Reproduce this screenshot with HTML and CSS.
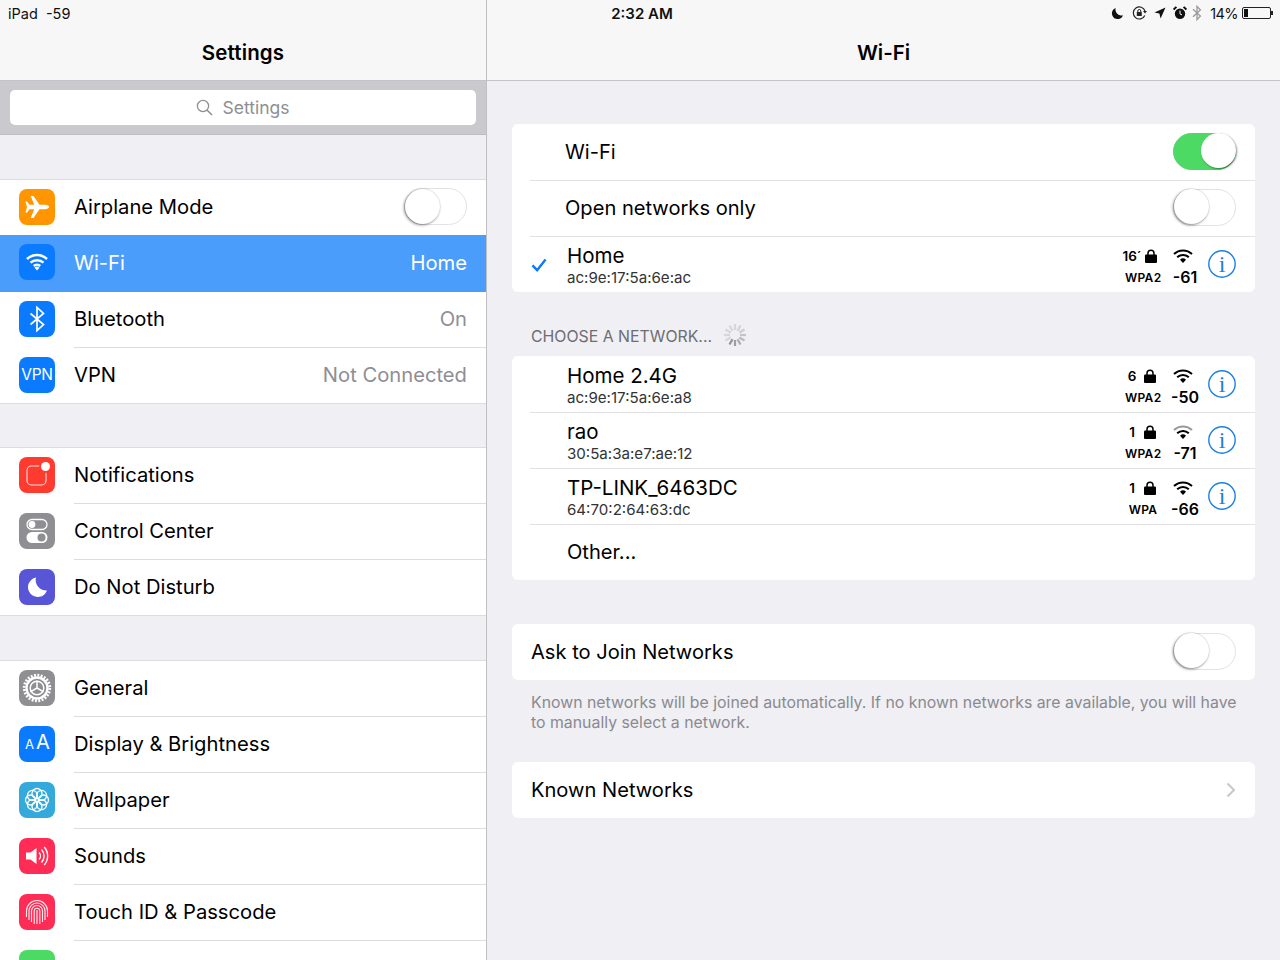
FILE: index.html
```html
<!DOCTYPE html>
<html lang="en">
<head>
<meta charset="utf-8">
<title>Settings - Wi-Fi</title>
<link rel="stylesheet" href="styles.css">
</head>
<body>
<div class="screen">
  <div class="status">
    <div class="carrier">iPad&nbsp; -59</div>
    <div class="time">2:32 AM</div>
    <div class="indicators">
      <svg class="st st-moon" viewBox="0 0 14 14"><path d="M5 1a6.2 6.2 0 1 0 8 8A6.6 6.6 0 0 1 5 1z" fill="#111"/></svg>
      <svg class="st st-rot" viewBox="0 0 16 14"><path d="M12.8 9.5A6 6 0 1 1 13 5" fill="none" stroke="#222" stroke-width="1.2"/><path d="M11 5h4l-2 2.4z" fill="#222"/><rect x="4.8" y="6" width="5" height="4" rx=".6" fill="#222"/><path d="M5.8 6V5a1.5 1.5 0 0 1 3 0v1" fill="none" stroke="#222"/></svg>
      <svg class="st st-loc" viewBox="0 0 12 12"><path d="M11.5.5 6.6 11.5 5.4 6.6.5 5.4z" fill="#111"/></svg>
      <svg class="st st-alarm" viewBox="0 0 14 14"><circle cx="7" cy="7.700" r="5.200" fill="#111"/><path d="M7 4.600v3.300l2 1" fill="none" stroke="#fff" stroke-width="1"/><path d="M.6 3.600 3.400.9M10.600.9l2.800 2.700" stroke="#111" stroke-width="2"/></svg>
      <svg class="st st-bt" viewBox="0 0 10 16"><path d="M1 4.200 8.400 11 5 14.600V1.400L8.400 5 1 11.800" fill="none" stroke="#9a9a9e" stroke-width="1.300"/></svg>
      <span class="pct">14%</span>
      <span class="battery"><span class="charge"></span></span>
    </div>
  </div>

  <aside class="master">
    <header class="bar"><h1>Settings</h1></header>
    <div class="searchwrap">
      <div class="search">
        <svg class="lens" viewBox="0 0 17 17"><circle cx="7" cy="7" r="5.600" fill="none" stroke="#8e8e93" stroke-width="1.300"/><path d="m11 11 5 5" stroke="#8e8e93" stroke-width="1.500"/></svg>
        <span>Settings</span>
      </div>
    </div>

    <div class="gap"></div>
    <section class="group">
      <div class="item">
        <span class="ico orange"><svg viewBox="0 0 36 36"><path d="M30 18c0-1.300-2-2.200-4-2.200h-5.500L14.500 7h-2.800l3.500 8.800H10.500L8 12.500H6.500L8 18 6.500 23.500H8l2.500-3.300h4.700L11.700 29h2.800l6-8.800H26c2 0 4-.9 4-2.200z" fill="#fff"/></svg></span>
        <span class="label">Airplane Mode</span>
        <span class="toggle"><span class="knob"></span></span>
      </div>
      <div class="item selected">
        <span class="ico blue"><svg viewBox="0 0 36 36"><path d="M8 15a14.500 14.500 0 0 1 20 0M11.500 18.700a9.500 9.500 0 0 1 13 0M14.800 22a4.700 4.700 0 0 1 6.400 0" fill="none" stroke="#fff" stroke-width="2.500"/><path d="m18 26.500-2.500-2.800a3.600 3.600 0 0 1 5 0z" fill="#fff"/></svg></span>
        <span class="label">Wi-Fi</span>
        <span class="value">Home</span>
      </div>
      <div class="item">
        <span class="ico blue"><svg viewBox="0 0 36 36"><path d="M11.500 12.500 24.500 23.500 18 29.500V6.500L24.500 12.500 11.500 23.500" fill="none" stroke="#fff" stroke-width="1.700"/></svg></span>
        <span class="label">Bluetooth</span>
        <span class="value">On</span>
      </div>
      <div class="item">
        <span class="ico blue vpn">VPN</span>
        <span class="label">VPN</span>
        <span class="value">Not Connected</span>
      </div>
    </section>

    <div class="gap gap-short"></div>
    <section class="group">
      <div class="item">
        <span class="ico red"><svg viewBox="0 0 36 36"><rect x="8" y="9" width="19" height="19" rx="4.500" fill="none" stroke="#fff" stroke-width="1.100" opacity=".85"/><circle cx="26.500" cy="9.500" r="6.500" fill="#ff3b30"/><circle cx="26.500" cy="9.500" r="4.500" fill="#fff"/></svg></span>
        <span class="label">Notifications</span>
      </div>
      <div class="item">
        <span class="ico grey"><svg viewBox="0 0 36 36"><rect x="8" y="6.500" width="20" height="10" rx="5" fill="none" stroke="#fff" stroke-width="1.300"/><circle cx="13" cy="11.500" r="3.400" fill="#fff"/><rect x="7.500" y="19" width="21" height="11" rx="5.500" fill="#fff"/><circle cx="22.500" cy="24.500" r="4" fill="#8e8e93"/></svg></span>
        <span class="label">Control Center</span>
      </div>
      <div class="item">
        <span class="ico purple"><svg viewBox="0 0 36 36"><path d="M17 8.500A9.800 9.800 0 1 0 28 21.500 10.500 10.500 0 0 1 17 8.500z" fill="#fff"/></svg></span>
        <span class="label">Do Not Disturb</span>
      </div>
    </section>

    <div class="gap"></div>
    <section class="group">
      <div class="item">
        <span class="ico grey"><svg viewBox="0 0 36 36"><circle cx="18" cy="18" r="12.800" fill="none" stroke="#fff" stroke-width="2.800" stroke-dasharray="1.900 1.450"/><circle cx="18" cy="18" r="10.500" fill="none" stroke="#fff" stroke-width="2.400"/><circle cx="18" cy="18" r="6.800" fill="none" stroke="#fff" stroke-width="1.500"/><path d="M18 18V10.500M18 18l6.600 3.800M18 18l-6.600 3.800" stroke="#fff" stroke-width="1.500"/></svg></span>
        <span class="label">General</span>
      </div>
      <div class="item">
        <span class="ico blue aa"><small>A</small>A</span>
        <span class="label">Display &amp; Brightness</span>
      </div>
      <div class="item">
        <span class="ico sky"><svg viewBox="0 0 36 36"><g fill="none" stroke="#fff" stroke-width="1.300"><circle cx="18" cy="11.500" r="5"/><circle cx="18" cy="24.500" r="5"/><circle cx="11.500" cy="18" r="5"/><circle cx="24.500" cy="18" r="5"/><circle cx="13.400" cy="13.400" r="5"/><circle cx="22.600" cy="13.400" r="5"/><circle cx="13.400" cy="22.600" r="5"/><circle cx="22.600" cy="22.600" r="5"/></g></svg></span>
        <span class="label">Wallpaper</span>
      </div>
      <div class="item">
        <span class="ico pink"><svg viewBox="0 0 36 36"><path d="M7 14.500h4.500l6-4.500v16l-6-4.500H7z" fill="#fff"/><path d="M20 14.500a5 5 0 0 1 0 7M22.500 11.500a9.500 9.500 0 0 1 0 13M25.200 9a13.500 13.500 0 0 1 0 18" fill="none" stroke="#fff" stroke-width="1.400"/></svg></span>
        <span class="label">Sounds</span>
      </div>
      <div class="item">
        <span class="ico pink"><svg viewBox="0 0 36 36"><g fill="none" stroke="#fff" stroke-width="1.100" opacity=".92"><path d="M7.500 23V17a10.500 10.500 0 0 1 21 0v6"/><path d="M10 26V17a8 8 0 0 1 16 0v9"/><path d="M12.500 28V17a5.500 5.500 0 0 1 11 0v11"/><path d="M15.200 30V17a2.800 2.800 0 0 1 5.600 0v13"/><path d="M18 30V16"/></g></svg></span>
        <span class="label">Touch ID &amp; Passcode</span>
      </div>
      <div class="item">
        <span class="ico green"></span>
      </div>
    </section>
  </aside>

  <main class="detail">
    <header class="bar"><h1>Wi-Fi</h1></header>
    <div class="content">
      <section class="card">
        <div class="row inset"><span class="label">Wi-Fi</span>
          <span class="toggle on"><span class="knob"></span></span></div>
        <div class="row inset"><span class="label">Open networks only</span>
          <span class="toggle"><span class="knob"></span></span></div>
        <div class="row net">
          <svg class="check" viewBox="0 0 17 15"><path d="m1.500 8 5 5L15.500 1.500" fill="none" stroke="#0a7aff" stroke-width="2.600"/></svg>
          <div class="names"><div class="ssid">Home</div><div class="mac">ac:9e:17:5a:6e:ac</div></div>
          <div class="sec"><div class="chan"><span>16´</span><svg class="lock" viewBox="0 0 12 14"><path d="M3 6V4.200a3 3 0 0 1 6 0V6" fill="none" stroke="#000" stroke-width="1.500"/><rect y="5.500" width="12" height="8.500" rx="1" fill="#000"/></svg></div><div class="wpa">WPA2</div></div>
          <div class="sig"><svg class="wifi" viewBox="0 0 20 14"><path d="M1 5a13 13 0 0 1 18 0M4.200 8.200a8.500 8.500 0 0 1 11.600 0" fill="none" stroke="#000" stroke-width="2"/><path d="m10 14-3-3.300a4.400 4.400 0 0 1 6 0z" fill="#000"/></svg><div class="db">-61</div></div>
          <svg class="info" viewBox="0 0 28 28"><circle cx="14" cy="14" r="13.200" fill="none" stroke="#1a80e5" stroke-width="1.400"/><text x="14" y="22" text-anchor="middle">i</text></svg>
        </div>
      </section>

      <div class="sechead"><span>CHOOSE A NETWORK...</span>
        <svg class="spin" viewBox="0 0 24 24"><g stroke="#8e8e93" stroke-width="2.200"><path d="M12 1v6" opacity=".25"/><path d="M17.500 2.500l-3 5.200" opacity=".3"/><path d="M21.500 6.500l-5.200 3" opacity=".35"/><path d="M23 12h-6" opacity=".45"/><path d="M21.500 17.500l-5.200-3" opacity=".55"/><path d="M17.500 21.500l-3-5.200" opacity=".7"/><path d="M12 23v-6" opacity=".85"/><path d="M6.500 21.500l3-5.200" opacity=".95"/><path d="M2.500 17.500l5.200-3" opacity=".25"/><path d="M1 12h6" opacity=".25"/><path d="M2.500 6.500l5.200 3" opacity=".25"/><path d="M6.500 2.500l3 5.200" opacity=".25"/></g></svg>
      </div>

      <section class="card">
        <div class="row net">
          <div class="names"><div class="ssid">Home 2.4G</div><div class="mac">ac:9e:17:5a:6e:a8</div></div>
          <div class="sec"><div class="chan"><span>6</span><svg class="lock" viewBox="0 0 12 14"><path d="M3 6V4.200a3 3 0 0 1 6 0V6" fill="none" stroke="#000" stroke-width="1.500"/><rect y="5.500" width="12" height="8.500" rx="1" fill="#000"/></svg></div><div class="wpa">WPA2</div></div>
          <div class="sig"><svg class="wifi" viewBox="0 0 20 14"><path d="M1 5a13 13 0 0 1 18 0M4.200 8.200a8.500 8.500 0 0 1 11.600 0" fill="none" stroke="#000" stroke-width="2"/><path d="m10 14-3-3.300a4.400 4.400 0 0 1 6 0z" fill="#000"/></svg><div class="db">-50</div></div>
          <svg class="info" viewBox="0 0 28 28"><circle cx="14" cy="14" r="13.200" fill="none" stroke="#1a80e5" stroke-width="1.400"/><text x="14" y="22" text-anchor="middle">i</text></svg>
        </div>
        <div class="row net">
          <div class="names"><div class="ssid">rao</div><div class="mac">30:5a:3a:e7:ae:12</div></div>
          <div class="sec"><div class="chan"><span>1</span><svg class="lock" viewBox="0 0 12 14"><path d="M3 6V4.200a3 3 0 0 1 6 0V6" fill="none" stroke="#000" stroke-width="1.500"/><rect y="5.500" width="12" height="8.500" rx="1" fill="#000"/></svg></div><div class="wpa">WPA2</div></div>
          <div class="sig"><svg class="wifi" viewBox="0 0 20 14"><path d="M1 5a13 13 0 0 1 18 0" fill="none" stroke="#999" stroke-width="2"/><path d="M4.200 8.200a8.500 8.500 0 0 1 11.600 0" fill="none" stroke="#000" stroke-width="2"/><path d="m10 14-3-3.300a4.400 4.400 0 0 1 6 0z" fill="#000"/></svg><div class="db">-71</div></div>
          <svg class="info" viewBox="0 0 28 28"><circle cx="14" cy="14" r="13.200" fill="none" stroke="#1a80e5" stroke-width="1.400"/><text x="14" y="22" text-anchor="middle">i</text></svg>
        </div>
        <div class="row net">
          <div class="names"><div class="ssid">TP-LINK_6463DC</div><div class="mac">64:70:2:64:63:dc</div></div>
          <div class="sec"><div class="chan"><span>1</span><svg class="lock" viewBox="0 0 12 14"><path d="M3 6V4.200a3 3 0 0 1 6 0V6" fill="none" stroke="#000" stroke-width="1.500"/><rect y="5.500" width="12" height="8.500" rx="1" fill="#000"/></svg></div><div class="wpa">WPA</div></div>
          <div class="sig"><svg class="wifi" viewBox="0 0 20 14"><path d="M1 5a13 13 0 0 1 18 0M4.200 8.200a8.500 8.500 0 0 1 11.600 0" fill="none" stroke="#000" stroke-width="2"/><path d="m10 14-3-3.300a4.400 4.400 0 0 1 6 0z" fill="#000"/></svg><div class="db">-66</div></div>
          <svg class="info" viewBox="0 0 28 28"><circle cx="14" cy="14" r="13.200" fill="none" stroke="#1a80e5" stroke-width="1.400"/><text x="14" y="22" text-anchor="middle">i</text></svg>
        </div>
        <div class="row net"><span class="label">Other...</span></div>
      </section>

      <section class="card join">
        <div class="row plain"><span class="label">Ask to Join Networks</span>
          <span class="toggle"><span class="knob"></span></span></div>
      </section>
      <p class="note">Known networks will be joined automatically. If no known networks are available, you will have to manually select a network.</p>
      <section class="card">
        <div class="row plain"><span class="label">Known Networks</span>
          <svg class="chev" viewBox="0 0 10 16"><path d="m1.500 1.500 6.500 6.500-6.500 6.500" fill="none" stroke="#c7c7cc" stroke-width="2"/></svg></div>
      </section>
    </div>
  </main>
</div>
</body>
</html>
```

FILE: styles.css
```css
* { box-sizing: border-box; }
html, body { margin: 0; padding: 0; }
body { font-family: Inter, "Liberation Sans", sans-serif; color: #000; background: #efeff4; }

.screen { position: relative; width: 1280px; height: 960px; overflow: hidden; display: flex; }

/* status bar sits over both navigation bars */
.status { position: absolute; top: 0; left: 0; right: 0; height: 26px; padding: 0 7px 0 8px; display: grid; grid-template-columns: 1fr auto 1fr; align-items: center; font-size: 14.500px; color: #111; }
.carrier { font-size: 14.500px; }
.time { font-weight: 600; font-size: 15px; padding-left: 3px; }
.indicators { display: flex; align-items: center; justify-content: flex-end; }
.st { display: block; }
.st-moon { width: 13px; height: 13px; margin-right: 8px; }
.st-rot { width: 16px; height: 14px; margin-right: 6px; }
.st-loc { width: 12px; height: 12px; margin-right: 7px; }
.st-alarm { width: 14px; height: 14px; margin-right: 5px; }
.st-bt { width: 10px; height: 16px; margin-right: 8px; }
.pct { font-size: 14.500px; letter-spacing: -.6px; margin-right: 4px; }
.battery { position: relative; width: 29px; height: 12px; border: 1px solid #222; border-radius: 2px; margin-right: 2px; padding: 1px; display: block; }
.battery::after { content: ""; position: absolute; right: -3px; top: 3px; width: 2px; height: 4px; background: #222; }
.charge { display: block; width: 4px; height: 8px; background: #111; }

/* panes */
.master { width: 487px; flex: none; border-right: 1px solid #bfbfc3; background: #efeff4; }
.master h1 { letter-spacing: .15px; }
.detail { flex: 1; background: #efeff4; }
.bar { height: 81px; background: #f7f7f8; border-bottom: 1px solid #c4c4c8; display: flex; justify-content: center; padding-top: 40px; }
.bar h1 { margin: 0; font-size: 20.500px; line-height: 26px; font-weight: 600; }

.searchwrap { height: 54px; background: #c9c9ce; padding: 9px 10px 10px; border-bottom: 1px solid #bdbdc2; }
.search { height: 35px; background: #fff; border-radius: 5px; display: flex; align-items: center; justify-content: center; gap: 9px; color: #8e8e93; font-size: 17.500px; padding: 0 0 1px 0; }
.lens { width: 17px; height: 17px; }

/* sidebar list */
.gap { height: 44px; }
.gap-short { height: 43px; }
.group { background: #fff; border-top: 1px solid #dcdce0; }
.item { height: 56px; display: flex; align-items: center; padding: 0 19px 3px; font-size: 20.200px; position: relative; }
.item::after { content: ""; position: absolute; left: 74px; right: 0; bottom: 0; height: 1px; background: #dcdce0; }
.group .item:last-child::after { left: 0; }
.ico { width: 36px; height: 36px; border-radius: 8px; flex: none; display: flex; align-items: center; justify-content: center; color: #fff; }
.ico svg { width: 36px; height: 36px; display: block; }
.item .label { margin-left: 19px; flex: 1; }
.value { color: #8e8e93; }
.selected { background: #4a9dfb; color: #fff; height: 57px; margin-top: -1px; }
.selected::after { display: none; }
.selected .value { color: #fff; }
.orange { background: #ff9500; }
.blue { background: #0a7aff; }
.red { background: #ff3b30; }
.grey { background: #8e8e93; }
.purple { background: #5856d6; }
.sky { background: #34aadc; }
.pink { background: #ff2d55; }
.green { background: #4cd964; }
.vpn { font-size: 15.500px; letter-spacing: -.3px; }
.aa { font-size: 20px; align-items: baseline; padding: 4px 0 0 1px; }
.aa small { font-size: 13px; margin-right: 2px; }

/* toggles */
.toggle { width: 63px; height: 37px; border-radius: 19px; background: #fff; border: 1.500px solid #e2e2e5; position: relative; flex: none; display: block; }
.knob { position: absolute; left: -.5px; top: -.5px; width: 35px; height: 35px; border-radius: 50%; background: #fff; box-shadow: -1px 1px 3px rgba(0,0,0,.45), 0 0 0 .5px rgba(0,0,0,.1); }
.toggle.on { background: #4cd964; border-color: #4cd964; }
.toggle.on .knob { left: auto; right: -.5px; box-shadow: 1px 1px 2px rgba(0,0,0,.45); }
.row .toggle { margin-bottom: 2px; }

/* right cards */
.content { padding: 43px 25px 0; }
.card { background: #fff; border-radius: 6px; overflow: hidden; }
.row { height: 56px; display: flex; align-items: center; position: relative; font-size: 20.100px; }
.row + .row::before { content: ""; position: absolute; left: 18px; right: 0; top: 0; height: 1px; background: #e2e2e5; }
.row.inset { padding: 0 19px 0 53px; justify-content: space-between; }
.row.plain { padding: 0 19px; justify-content: space-between; }
.row.net { padding: 0 19px 0 55px; }
.check { position: absolute; left: 19px; top: 22px; width: 16px; height: 14px; }
.names { flex: 1; padding-top: 2px; }
.ssid { font-size: 20.500px; line-height: 25px; }
.mac { font-size: 15.100px; line-height: 18px; margin-top: 1px; color: #333; }
.sec { width: 40px; padding: 8px 0 2px; display: flex; flex-direction: column; align-items: center; }
.chan { display: flex; align-items: center; gap: 3px; font-size: 13.500px; font-weight: 600; height: 17px; justify-content: center; margin-left: -7px; }
.chan span { min-width: 18px; text-align: center; }
.lock { width: 12px; height: 14px; display: block; }
.wpa { max-width: 36px; overflow: hidden; white-space: nowrap; margin-top: 3px; font-size: 12px; font-weight: 600; line-height: 19px; letter-spacing: .3px; }
.sig { width: 30px; margin-left: 5px; margin-right: 10px; padding: 10px 0 2px; display: flex; flex-direction: column; align-items: center; }
.wifi { width: 20px; height: 14px; display: block; }
.db { font-size: 16px; font-weight: 600; line-height: 20px; margin-top: 4px; padding-left: 4px; white-space: nowrap; }
.info { width: 28px; height: 28px; flex: none; }
.info text { font-family: "Liberation Serif", serif; font-size: 24px; fill: #1a80e5; }

.sechead { height: 64px; padding: 33px 0 0 19px; display: flex; align-items: flex-start; gap: 11px; font-size: 15.850px; color: #6d6d72; line-height: 24px; }
.spin { width: 24px; height: 24px; flex: none; margin-top: -2px; }
.join { margin-top: 44px; }
.note { margin: 0; height: 82px; padding: 13px 15px 0 19px; font-size: 15.850px; line-height: 20px; color: #8a8a8f; }
.chev { width: 10px; height: 16px; }
```
